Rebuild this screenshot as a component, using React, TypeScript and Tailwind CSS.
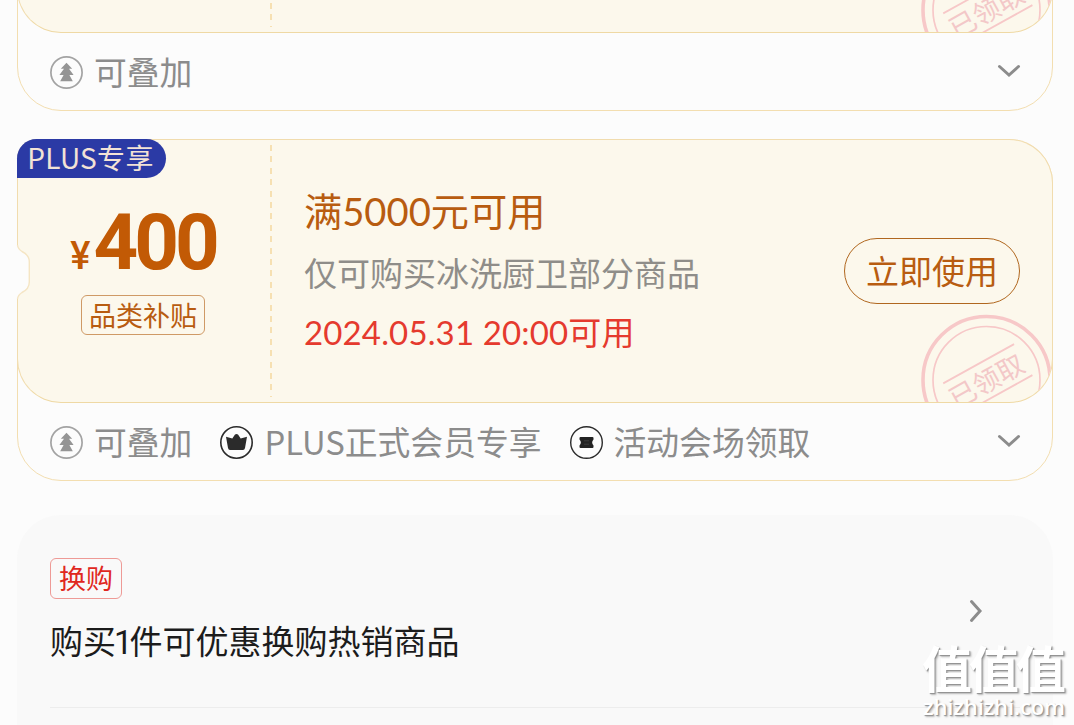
import type { ReactNode } from 'react'

const tags = {
  stack: { icon: <StackIcon />, label: '可叠加' },
  plus: { icon: <CrownIcon />, label: 'PLUS正式会员专享' },
  venue: { icon: <TicketIcon />, label: '活动会场领取' },
}

function StackIcon() {
  return (
    <svg width="33" height="33" viewBox="0 0 33 33" fill="none">
      <circle cx="16.5" cy="16.5" r="15.6" stroke="#a3a3a3" strokeWidth="1.7" />
      <path
        d="M16.5 6.8L22.2 12.8H19L23.6 18.9H19.4L22.8 25.2H10.2L13.6 18.9H9.4L14 12.8H10.8Z"
        fill="#959595"
      />
    </svg>
  )
}

function CrownIcon() {
  return (
    <svg width="33" height="33" viewBox="0 0 33 33" fill="none">
      <circle cx="16.5" cy="16.5" r="15.7" stroke="#2b2b2b" strokeWidth="1.6" />
      <path
        d="M6 10.8L12.3 12.4L15 8.6Q16.5 7.2 18 8.6L20.7 12.4L27 10.8L25 22Q24.6 24 23 24H10Q8.4 24 8 22Z"
        fill="#2b2b2b"
      />
    </svg>
  )
}

function TicketIcon() {
  return (
    <svg width="33" height="33" viewBox="0 0 33 33" fill="none">
      <circle cx="16.5" cy="16.5" r="15.8" stroke="#2b2b2b" strokeWidth="1.4" />
      <path
        d="M10.5 11H22.5Q23.5 11 23.5 12V13.5Q20.8 16.5 23.5 19.5V21Q23.5 22 22.5 22H10.5Q9.5 22 9.5 21V19.5Q12.2 16.5 9.5 13.5V12Q9.5 11 10.5 11Z"
        fill="#222"
      />
      <path d="M14 14.8H19M14 18.2H19" stroke="#555" strokeWidth="0.5" />
    </svg>
  )
}

function Stamp() {
  return (
    <svg className="absolute right-0 bottom-0" width="132" height="88" viewBox="920 315 132 88" fill="none">
      <g stroke="#f7c8c8">
        <circle cx="986.5" cy="381" r="63.5" strokeWidth="3.6" />
        <circle cx="986.5" cy="381" r="53.5" strokeWidth="1.7" />
        <g transform="rotate(-29 986.5 381)" strokeWidth="1.8">
          <path d="M947 363H1028M947 399H1029" />
        </g>
      </g>
      <text
        x="986"
        y="392"
        transform="rotate(-29 986.5 381)"
        textAnchor="middle"
        fontSize="27"
        fill="#f3c8c8"
        className="font-['Noto_Sans_CJK_SC',sans-serif]"
      >
        已领取
      </text>
    </svg>
  )
}

function Coupon({ items, children }: { items: (keyof typeof tags)[]; children?: ReactNode }) {
  return (
    <div className="relative h-[342px] shrink-0 rounded-[44px] rounded-tl-[20px] border border-[#f3deb0]">
      <div className="relative -mx-px -mt-px flex h-[264px] overflow-hidden rounded-[44px] rounded-tl-[20px] border border-[#f1dcae] border-b-[#efd9a4] bg-[#fcf8ec]">
        <Stamp />
        <div className="flex w-[252px] shrink-0 flex-col items-center pr-[2px]">{children && <Amount />}</div>
        <div className="my-[5px] w-[2px] shrink-0 bg-[repeating-linear-gradient(to_bottom,#f6e0b2_0_6px,transparent_6px_11.4px)]" />
        {children}
      </div>

      {/* left notch */}
      {children && (
        <svg className="absolute top-[104px] left-[-2px]" width="15" height="56" viewBox="0 0 15 56" fill="none">
          <path d="M0 1H1.5Q2 5 6 7.5Q13.3 11 13.3 18V38Q13.3 45 6 48.5Q2 51 1.5 55H0Z" fill="#fcfcfc" />
          <path d="M1.5 1Q2 5 6 7.5Q13.3 11 13.3 18V38Q13.3 45 6 48.5Q2 51 1.5 55" stroke="#f5e5c4" strokeWidth="1.4" />
        </svg>
      )}

      <div className="flex h-[78px] items-center pr-[31px] pl-8">
        {items.map((key) => (
          <div key={key} className="mr-[28px] flex items-center gap-[11px]">
            {tags[key].icon}
            <span className="mb-[3px] text-[32.8px] leading-[40px] whitespace-nowrap text-[#8c8c8c]">
              {tags[key].label}
            </span>
          </div>
        ))}
        <svg className="mb-0.5 ml-auto" width="24" height="14" viewBox="0 0 24 14" fill="none">
          <path d="M2.5 2.5L12 11L21.5 2.5" stroke="#8c8c8c" strokeWidth="3" strokeLinecap="round" />
        </svg>
      </div>
    </div>
  )
}

function Amount() {
  return (
    <>
      <div className="mt-[65px] flex h-[76px] items-baseline font-['Roboto',sans-serif] text-[#c25a05]">
        <span className="text-[38px] leading-[76px] font-medium">¥</span>
        <span className="ml-[3px] text-[78px] leading-[76px] font-bold tracking-[-4px]">400</span>
      </div>
      <div className="mt-[14px] flex h-10 w-[124px] items-center justify-center rounded-[6px] border border-[#cf9a66] pb-[2px] text-[27px] leading-none text-[#b85c10]">
        品类补贴
      </div>
    </>
  )
}

export default function App() {
  return (
    <div className="relative flex h-[725px] w-[1074px] flex-col overflow-hidden bg-[#fcfcfc] pr-[21px] pl-[17px] font-['Noto_Sans_CJK_SC',sans-serif]">
      <div className="-mt-[231px] shrink-0">
        <Coupon items={['stack']} />
      </div>

      <div className="relative mt-7 shrink-0">
        <Coupon items={['stack', 'plus', 'venue']}>
          <div className="flex flex-1 items-center justify-between pr-8 pl-[33px]">
            <div className="mt-0.5 -ml-px flex flex-col whitespace-nowrap">
              <span className="-mt-px mb-px font-['Lato','Noto_Sans_CJK_SC',sans-serif] text-[38.2px] leading-[60px] text-[#b85c10]">
                满5000元可用
              </span>
              <span className="text-[33px] leading-[60px] text-[#8f8d89]">仅可购买冰洗厨卫部分商品</span>
              <span className="font-['Lato','Noto_Sans_CJK_SC',sans-serif] text-[33px] leading-[60px] tracking-[0.15px] text-[#e53a2e]">
                2024.05.31 20:00可用
              </span>
            </div>
            <button className="h-[66px] w-[176px] rounded-full border border-[#b0671f] pb-[2px] text-[33px] leading-none text-[#b85c10]">
              立即使用
            </button>
          </div>
        </Coupon>
        <div className="absolute top-0 left-0 flex h-[39px] w-[149px] items-center justify-center rounded-[20px] rounded-bl-none bg-[#2b3aa5] pr-[2px] pb-[3px] text-[28px] leading-none tracking-[0.3px] text-[#f3e3d6]">
          PLUS专享
        </div>
      </div>

      <div className="mt-[34px] flex h-[240px] shrink-0 flex-col rounded-t-[44px] bg-[#f9f9f9] px-[33px] pt-[43px]">
        <div className="flex h-[150px] shrink-0 border-b border-[#ededed]">
          <div className="flex flex-1 flex-col items-start">
            <span className="flex h-[41px] w-[72px] items-center justify-center rounded-[6px] border border-[#ee9a96] pb-[2px] text-[27px] leading-none text-[#e0281e]">
              换购
            </span>
            <span className="mt-[21px] text-[33px] leading-[40px] text-[#1c1c1c]">
              购买<span className="-ml-[2px] font-['Roboto',sans-serif] tracking-[-3px]">1</span>件可优惠换购热销商品
            </span>
          </div>
          <svg className="mt-[41px] mr-[37px]" width="14" height="24" viewBox="0 0 14 24" fill="none">
            <path d="M2.5 2.5L11 12L2.5 21.5" stroke="#8c8c8c" strokeWidth="3" strokeLinecap="round" />
          </svg>
        </div>
      </div>

      {/* watermark */}
      <div className="absolute right-[9px] bottom-[7px] flex w-[142px] flex-col items-start whitespace-nowrap text-white [text-shadow:1px_1px_1px_#8f8f8f,2px_2px_2px_#bdbdbd]">
        <span className="-ml-px text-[50px] leading-[56px] font-bold tracking-[-3px]">值值值</span>
        <span className="font-['Open_Sans',sans-serif] text-[22px] leading-[24px] font-semibold tracking-[-0.1px]">
          zhizhizhi.com
        </span>
      </div>
    </div>
  )
}
